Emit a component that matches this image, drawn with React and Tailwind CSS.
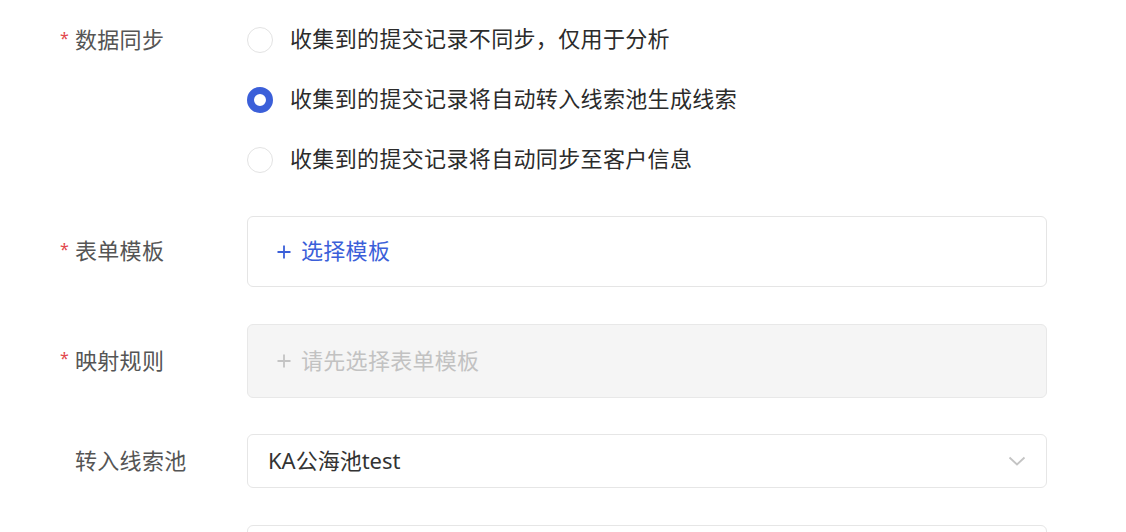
import React from 'react';

const font = { fontFamily: '"Noto Sans", "Noto Sans CJK SC", sans-serif' };

const Label = ({ required, children }) => (
    <div className="w-[187px] shrink-0 flex items-center">
        <span className="w-[15px] text-[16px] leading-none text-[#e2474d] relative -top-[3px]">{required ? '*' : ''}</span>
        <span className="text-[22px] tracking-[0.3px] text-[#555555] -mt-[2px]">{children}</span>
    </div>
);

const Radio = ({ checked, children }) => (
    <div className="flex items-center h-[30px]">
        {checked ? (
            <span className="w-[26px] h-[26px] rounded-full border-[7px] border-[#3b5fd9] bg-white shrink-0" />
        ) : (
            <span className="w-[26px] h-[26px] rounded-full border border-[#e3e3e3] bg-white shrink-0" />
        )}
        <span className="ml-[17px] text-[22px] tracking-[0.35px] text-[#2b2b2b] -mt-[3px]">{children}</span>
    </div>
);

const Plus = ({ color }) => (
    <svg width="16" height="16" viewBox="0 0 16 16" className="shrink-0">
        <path d="M8 1.5v13M1.5 8h13" stroke={color} strokeWidth="1.8" fill="none" />
    </svg>
);

export default function App() {
    return (
        <div className="min-h-screen bg-white pl-[60px] pt-[25px]" style={font}>
            <div className="flex">
                <div className="w-[187px] shrink-0 flex items-start h-[30px]">
                    <Label required>数据同步</Label>
                </div>
                <div className="flex flex-col gap-[30px]">
                    <Radio>收集到的提交记录不同步，仅用于分析</Radio>
                    <Radio checked>收集到的提交记录将自动转入线索池生成线索</Radio>
                    <Radio>收集到的提交记录将自动同步至客户信息</Radio>
                </div>
            </div>

            <div className="flex items-center mt-[41px]">
                <Label required>表单模板</Label>
                <div className="w-[800px] h-[71px] border border-[#e5e5e5] rounded-[6px] bg-white flex items-center pl-[28px] gap-[9px]">
                    <Plus color="#3b5fd9" />
                    <span className="text-[22px] tracking-[0.3px] text-[#3b5fd9] -mt-[2px]">选择模板</span>
                </div>
            </div>

            <div className="flex items-center mt-[37px]">
                <Label required>映射规则</Label>
                <div className="w-[800px] h-[74px] border border-[#e8e8e8] rounded-[6px] bg-[#f5f5f5] flex items-center pl-[28px] gap-[9px]">
                    <Plus color="#c4c4c4" />
                    <span className="text-[22px] tracking-[0.3px] text-[#c2c2c2] -mt-[2px]">请先选择表单模板</span>
                </div>
            </div>

            <div className="flex items-center mt-[36px]">
                <Label>转入线索池</Label>
                <div className="w-[800px] h-[54px] border border-[#e6e6e6] rounded-[6px] bg-white flex items-center justify-between pl-[20px] pr-[20px]">
                    <span className="text-[22px] text-[#333333] -mt-[2px]">KA公海池test</span>
                    <svg width="18" height="10" viewBox="0 0 18 10">
                        <path d="M1.5 1.5l7.5 7 7.5-7" stroke="#c4c4c4" strokeWidth="1.8" fill="none" />
                    </svg>
                </div>
            </div>

            <div className="flex items-center mt-[37px]">
                <div className="w-[187px] shrink-0" />
                <div className="w-[800px] h-[54px] border border-[#e6e6e6] rounded-[6px] bg-white" />
            </div>
        </div>
    );
}
